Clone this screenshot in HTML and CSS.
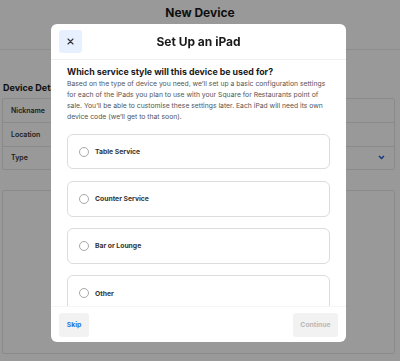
FILE: index.html
```html
<!DOCTYPE html>
<html>
<head>
<meta charset="utf-8">
<link rel="stylesheet" href="styles.css">
</head>
<body>
<div class="page">
  <header class="page-header"><h1 class="page-title">New Device</h1></header>
  <section class="details">
    <h2 class="details-title">Device Details</h2>
    <div class="field-table">
      <div class="field-row"><span class="field-label">Nickname</span></div>
      <div class="field-row"><span class="field-label">Location</span></div>
      <div class="field-row"><span class="field-label">Type</span>
        <svg class="chevron" width="7" height="5" viewBox="0 0 7 5"><path d="M1 1l2.5 2.5L6 1" fill="none" stroke="#1f5fd6" stroke-width="1.5"/></svg>
      </div>
    </div>
    <div class="big-box"></div>
  </section>
</div>
<div class="overlay"></div>
<div class="modal">
  <div class="modal-header">
    <button class="close-btn" aria-label="Close">
      <svg width="7" height="7" viewBox="0 0 7 7"><path d="M1 1l5 5M6 1l-5 5" stroke="#333" stroke-width="1.1" stroke-linecap="round"/></svg>
    </button>
    <h2 class="modal-title">Set Up an iPad</h2>
  </div>
  <div class="modal-body">
    <h3 class="question">Which service style will this device be used for?</h3>
    <p class="intro">Based on the type of device you need, we’ll set up a basic configuration settings for each of the iPads you plan to use with your Square for Restaurants point of sale. You’ll be able to customise these settings later. Each iPad will need its own device code (we’ll get to that soon).</p>
    <div class="options">
      <label class="option"><span class="radio"></span><span class="option-label">Table Service</span></label>
      <label class="option"><span class="radio"></span><span class="option-label">Counter Service</span></label>
      <label class="option"><span class="radio"></span><span class="option-label">Bar or Lounge</span></label>
      <label class="option"><span class="radio"></span><span class="option-label">Other</span></label>
    </div>
  </div>
  <div class="modal-footer">
    <button class="btn btn-skip">Skip</button>
    <button class="btn btn-continue">Continue</button>
  </div>
</div>
</body>
</html>
```
FILE: styles.css
```css
* { box-sizing: border-box; }
html, body { margin: 0; padding: 0; }
body {
  width: 400px;
  height: 361px;
  overflow: hidden;
  background: #fff;
  font-family: Inter, "Liberation Sans", sans-serif;
  color: #1a1a1a;
}
.page { height: 361px; }
.page-header {
  height: 50px;
  border-bottom: 1px solid #ebebeb;
  display: flex;
  justify-content: center;
  padding-top: 5px;
}
.page-title {
  margin: 0;
  font-size: 12px;
  line-height: 16px;
  font-weight: 700;
}
.details { padding: 0 5px 0 2px; }
.details-title {
  margin: 32px 0 4px 1px;
  font-size: 9px;
  line-height: 12px;
  font-weight: 700;
}
.field-table {
  border: 1px solid #e6e6e6;
  border-radius: 2px;
}
.field-row {
  height: 23.3px;
  display: flex;
  align-items: center;
  justify-content: space-between;
  padding: 0 9px 0 8px;
  border-top: 1px solid #e6e6e6;
}
.field-row:first-child { border-top: none; }
.field-label {
  font-size: 7px;
  font-weight: 600;
  color: #333;
}
.big-box {
  margin-top: 20px;
  height: 164px;
  border: 1px solid #e6e6e6;
  border-radius: 2px;
}
.overlay {
  position: fixed;
  inset: 0;
  background: rgba(0, 0, 0, 0.4);
}
.modal {
  position: absolute;
  left: 51px;
  top: 24px;
  width: 295px;
  height: 318px;
  background: #fff;
  border-radius: 6px;
  display: flex;
  flex-direction: column;
  overflow: hidden;
}
.modal-header {
  position: relative;
  height: 36px;
  border-bottom: 1px solid #f0f0f0;
  display: flex;
  align-items: center;
  justify-content: center;
  flex: none;
}
.close-btn {
  position: absolute;
  left: 8px;
  top: 6px;
  width: 23px;
  height: 23px;
  border: none;
  border-radius: 3px;
  background: #e7f0fe;
  padding: 0;
  display: flex;
  align-items: center;
  justify-content: center;
}
.modal-title {
  margin: 0;
  font-size: 12px;
  font-weight: 700;
  line-height: 16px;
  margin-top: 1px;
}
.modal-body {
  flex: 1;
  overflow: hidden;
  padding: 6px 16px 0 16px;
}
.question {
  margin: 0;
  font-size: 8.8px;
  line-height: 11px;
  font-weight: 700;
}
.intro {
  margin: 0.5px 0 0 0;
  font-size: 6.8px;
  line-height: 11.3px;
  color: #555;
}
.options { margin-top: 11px; }
.option {
  display: flex;
  align-items: center;
  height: 35.7px;
  margin-bottom: 11.5px;
  border: 1px solid #dcdcdc;
  border-radius: 6px;
  padding-left: 11px;
}
.radio {
  width: 10px;
  height: 10px;
  border: 1px solid #a8a8a8;
  border-radius: 50%;
  flex: none;
}
.option-label {
  margin-left: 6px;
  font-size: 6.8px;
  font-weight: 700;
  color: #333;
}
.modal-footer {
  flex: none;
  height: 36px;
  border-top: 1px solid #f5f5f5;
  display: flex;
  justify-content: space-between;
  align-items: flex-start;
  padding: 6px 8px 0 8px;
}
.btn {
  height: 23.5px;
  border: none;
  border-radius: 3px;
  background: #f2f2f2;
  font-family: inherit;
  font-size: 6.8px;
  font-weight: 700;
  padding: 0;
}
.btn-skip { width: 30px; color: #1f6fe0; }
.btn-continue { width: 45px; color: #b8b8b8; }
```
